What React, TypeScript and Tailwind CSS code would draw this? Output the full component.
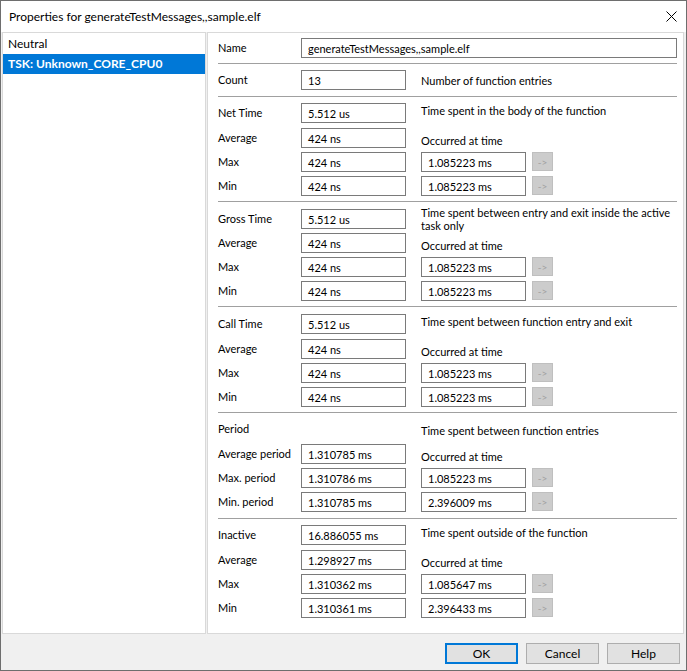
import React from "react";

type Row = { label: string; v1?: string; v2?: string; desc?: React.ReactNode; twoLine?: boolean; occ?: boolean };

type Section = { pt: string; gaps: string[]; pb: string; rows: Row[] };

const sections: Section[] = [
  {
    pt: "pt-[6px]",
    gaps: ["mt-[5px]", "mt-[4px]", "mt-[4px]"],
    pb: "pb-[5px]",
    rows: [
      { label: "Net Time", v1: "5.512 us", desc: "Time spent in the body of the function" },
      { label: "Average", v1: "424 ns", occ: true },
      { label: "Max", v1: "424 ns", v2: "1.085223 ms" },
      { label: "Min", v1: "424 ns", v2: "1.085223 ms" },
    ],
  },
  {
    pt: "pt-[7px]",
    gaps: ["mt-[4px]", "mt-[4px]", "mt-[4px]"],
    pb: "pb-[5px]",
    rows: [
      {
        label: "Gross Time",
        v1: "5.512 us",
        twoLine: true,
        desc: (
          <>
            Time spent between entry and exit inside the active
            <br />
            task only
          </>
        ),
      },
      { label: "Average", v1: "424 ns", occ: true },
      { label: "Max", v1: "424 ns", v2: "1.085223 ms" },
      { label: "Min", v1: "424 ns", v2: "1.085223 ms" },
    ],
  },
  {
    pt: "pt-[7px]",
    gaps: ["mt-[5px]", "mt-[4px]", "mt-[4px]"],
    pb: "pb-[5px]",
    rows: [
      { label: "Call Time", v1: "5.512 us", desc: "Time spent between function entry and exit" },
      { label: "Average", v1: "424 ns", occ: true },
      { label: "Max", v1: "424 ns", v2: "1.085223 ms" },
      { label: "Min", v1: "424 ns", v2: "1.085223 ms" },
    ],
  },
  {
    pt: "pt-[6px]",
    gaps: ["mt-[5px]", "mt-[4px]", "mt-[4px]"],
    pb: "pb-[6px]",
    rows: [
      { label: "Period", desc: "Time spent between function entries" },
      { label: "Average period", v1: "1.310785 ms", occ: true },
      { label: "Max. period", v1: "1.310786 ms", v2: "1.085223 ms" },
      { label: "Min. period", v1: "1.310785 ms", v2: "2.396009 ms" },
    ],
  },
  {
    pt: "pt-[6px]",
    gaps: ["mt-[5px]", "mt-[4px]", "mt-[4px]"],
    pb: "pb-0",
    rows: [
      { label: "Inactive", v1: "16.886055 ms", desc: "Time spent outside of the function" },
      { label: "Average", v1: "1.298927 ms", occ: true },
      { label: "Max", v1: "1.310362 ms", v2: "1.085647 ms" },
      { label: "Min", v1: "1.310361 ms", v2: "2.396433 ms" },
    ],
  },
];

function Box({ value, wide }: { value: string; wide?: boolean }) {
  return (
    <div
      className={
        (wide ? "w-[376px] " : "w-[105px] ") +
        "h-[20px] shrink-0 border border-[#7a7a7a] bg-white pl-[6px] flex items-center leading-none text-black"
      }
    >
      {value}
    </div>
  );
}

function Sep() {
  return <div className="h-px w-[459px] bg-[#a0a0a0]" />;
}

function DataRow({ row, cls }: { row: Row; cls: string }) {
  return (
    <div className={"flex h-[20px] " + cls}>
      <div className="w-[83px] shrink-0 flex items-center">{row.label}</div>
      {row.v1 ? <Box value={row.v1} /> : <div className="w-[105px] shrink-0" />}
      <div className="w-[15px] shrink-0" />
      {row.v2 ? (
        <>
          <Box value={row.v2} />
          <div className="ml-[6px] h-[19px] w-[21px] border border-[#bfbfbf] bg-[#cccccc] text-[#a0a0a0] text-[10px] flex items-center justify-center leading-none">
            -&gt;
          </div>
        </>
      ) : row.occ ? (
        <div className="flex items-end leading-[14px] whitespace-nowrap">Occurred at time</div>
      ) : row.desc ? (
        <div
          className={
            "leading-[13px] whitespace-nowrap " +
            (row.twoLine ? "-mt-[3px]" : row.v1 ? "pt-[1px]" : "self-center pt-[2px]")
          }
        >
          {row.desc}
        </div>
      ) : null}
    </div>
  );
}

export default function App() {
  return (
    <div
      className="w-[687px] h-[671px] border border-[#6e6e6e] bg-[#f0f0f0] flex flex-col text-[12px] text-black overflow-hidden"
      style={{ fontFamily: "Lato, 'Noto Sans', sans-serif" }}
    >
      {/* title bar */}
      <div className="h-[31px] bg-white flex items-center pl-[8px] relative shrink-0">
        <span>Properties for generateTestMessages,,sample.elf</span>
        <svg className="absolute left-[665px] top-[10px]" width="11" height="11" viewBox="0 0 11 11">
          <path d="M0.5 0.5 L10.5 10.5 M10.5 0.5 L0.5 10.5" stroke="#000" strokeWidth="1" />
        </svg>
      </div>

      {/* main */}
      <div className="flex h-[602px] shrink-0 pl-px">
        <div className="w-[204px] border border-[#d9d9d9] bg-white pt-px">
          <div className="h-[20px] flex items-center pl-[5px]">Neutral</div>
          <div className="h-[20px] flex items-center pl-[5px] bg-[#0078d7] text-white font-bold">
            TSK: Unknown_CORE_CPU0
          </div>
        </div>
        <div className="ml-px w-[477px] border border-[#d9d9d9] bg-white pl-[10px] pt-[5px] text-[11px]">
          <div className="flex h-[20px]">
            <div className="w-[83px] shrink-0 flex items-center">Name</div>
            <Box value="generateTestMessages,,sample.elf" wide />
          </div>
          <div className="mt-[5px]">
            <Sep />
          </div>
          <div className="flex h-[20px] mt-[6px]">
            <div className="w-[83px] shrink-0 flex items-center">Count</div>
            <Box value="13" />
            <div className="w-[15px] shrink-0" />
            <div className="flex items-center pt-[2px]">Number of function entries</div>
          </div>
          <div className="mt-[6px]">
            <Sep />
          </div>
          {sections.map((s, si) => (
            <div key={si}>
              <div className={s.pt + " " + s.pb}>
                {s.rows.map((r, ri) => (
                  <DataRow key={ri} row={r} cls={ri === 0 ? "" : s.gaps[ri - 1]} />
                ))}
              </div>
              {si < sections.length - 1 && <Sep />}
            </div>
          ))}
        </div>
      </div>

      {/* footer */}
      <div className="flex-1 flex justify-end items-start pt-[9px] pr-[6px] gap-[8px]">
        <button className="w-[73px] h-[21px] border-2 border-[#0078d7] bg-[#e1e1e1] flex items-center justify-center">
          OK
        </button>
        <button className="w-[73px] h-[21px] border border-[#adadad] bg-[#e1e1e1] flex items-center justify-center">
          Cancel
        </button>
        <button className="w-[73px] h-[21px] border border-[#adadad] bg-[#e1e1e1] flex items-center justify-center">
          Help
        </button>
      </div>
    </div>
  );
}
